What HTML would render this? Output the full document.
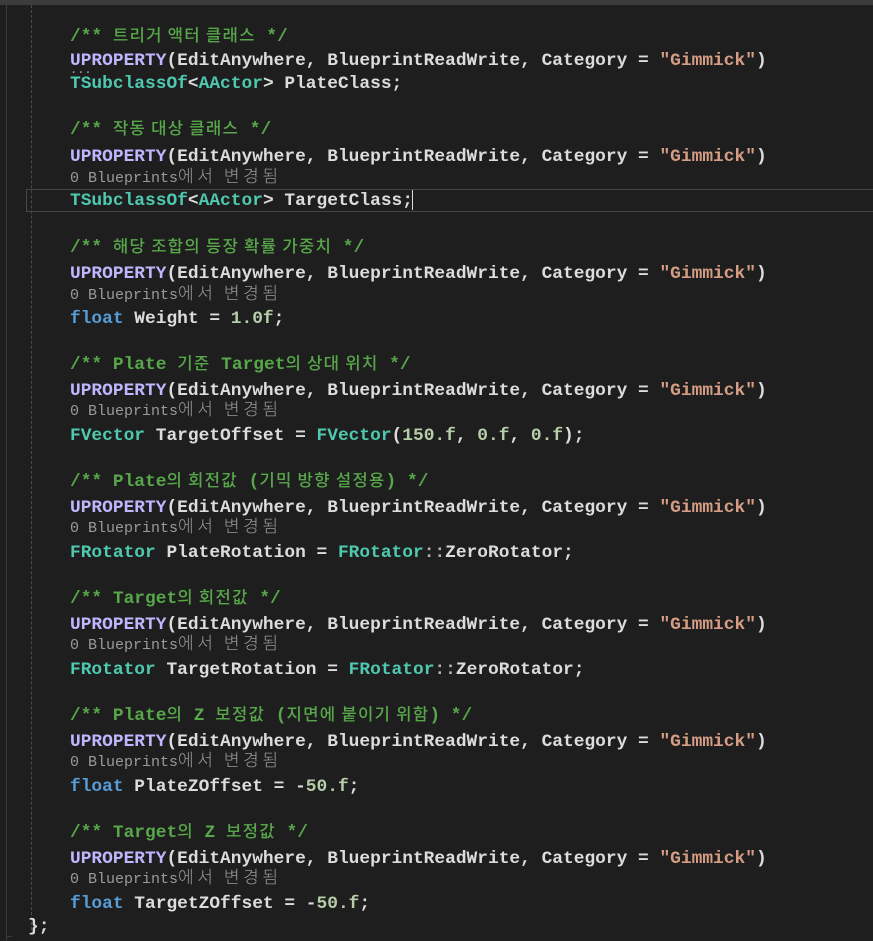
<!DOCTYPE html>
<html><head><meta charset="utf-8"><style>
html,body{margin:0;padding:0;width:873px;height:941px;overflow:hidden;background:#1e1e1e;}
.top{position:absolute;left:0;top:0;width:873px;height:5px;background:#3c3c3c;}
.vl{position:absolute;left:6px;top:5px;width:1px;height:936px;background:#3a3a3a;}
.vb{position:absolute;left:6px;top:936px;width:6px;height:1px;background:#3a3a3a;}
.guide{position:absolute;left:31px;top:5px;width:0;height:930px;border-left:1px dashed #4a4a4a;}
.cur{position:absolute;left:26px;top:189px;width:850px;height:21px;border:1px solid #464646;}
.caret{position:absolute;left:412px;top:190px;width:1px;height:20px;background:#dcdcdc;}
.l{position:absolute;left:70px;height:23px;line-height:23px;white-space:pre;font-family:"Liberation Mono","NanumGothic","Noto Sans CJK KR",monospace;font-size:17.87px;font-weight:bold;color:#dcdcdc;}
.lens{position:absolute;left:70px;height:22px;line-height:22px;white-space:pre;font-family:"Liberation Mono","NanumGothic","Noto Sans CJK KR",monospace;font-size:15px;color:#9a9a9a;}
.lens b{font-size:17px;font-family:"Noto Sans CJK KR","NanumGothic",sans-serif;font-weight:300;letter-spacing:3.6px;line-height:1;}
.h{font-size:16.75px;font-family:"Noto Sans CJK KR","NanumGothic",sans-serif;font-weight:500;line-height:1;letter-spacing:1.2px;}
.c{color:#57a64a}.m{color:#beb7ff}.t{color:#4ec9b0}.k{color:#569cd6}.s{color:#d69d85}.n{color:#b5cea8}.p{color:#b4b4b4}
.dots{position:absolute;left:70px;top:63px;font-family:"Liberation Mono",monospace;font-size:12px;color:#aaa;}
</style></head><body>
<div class="top"></div><div class="vl"></div><div class="vb"></div><div class="guide"></div>
<div class="cur"></div><div class="caret"></div>

<div class="l c" style="top:26px">/** <span class="h">트리거 액터 클래스</span> */</div>
<div class="l" style="top:50px"><span class="m">UPROPERTY</span>(EditAnywhere, BlueprintReadWrite, Category = <span class="s">"Gimmick"</span>)</div>
<div class="dots">...</div>
<div class="l" style="top:73px"><span class="t">TSubclassOf</span>&lt;<span class="t">AActor</span>&gt; PlateClass;</div>

<div class="l c" style="top:119px">/** <span class="h">작동 대상 클래스</span> */</div>
<div class="l" style="top:146px"><span class="m">UPROPERTY</span>(EditAnywhere, BlueprintReadWrite, Category = <span class="s">"Gimmick"</span>)</div>
<div class="lens" style="top:166px">0 Blueprints<b>에서 변경됨</b></div>
<div class="l" style="top:190px"><span class="t">TSubclassOf</span>&lt;<span class="t">AActor</span>&gt; TargetClass;</div>

<div class="l c" style="top:237px">/** <span class="h">해당 조합의 등장 확률 가중치</span> */</div>
<div class="l" style="top:263px"><span class="m">UPROPERTY</span>(EditAnywhere, BlueprintReadWrite, Category = <span class="s">"Gimmick"</span>)</div>
<div class="lens" style="top:283px">0 Blueprints<b>에서 변경됨</b></div>
<div class="l" style="top:308px"><span class="k">float</span> Weight = <span class="n">1.0f</span>;</div>

<div class="l c" style="top:354px">/** Plate <span class="h">기준</span> Target<span class="h">의 상대 위치</span> */</div>
<div class="l" style="top:380px"><span class="m">UPROPERTY</span>(EditAnywhere, BlueprintReadWrite, Category = <span class="s">"Gimmick"</span>)</div>
<div class="lens" style="top:399px">0 Blueprints<b>에서 변경됨</b></div>
<div class="l" style="top:425px"><span class="t">FVector</span> TargetOffset = <span class="t">FVector</span>(<span class="n">150.f</span>, <span class="n">0.f</span>, <span class="n">0.f</span>);</div>

<div class="l c" style="top:471px">/** Plate<span class="h">의 회전값</span> (<span class="h">기믹 방향 설정용</span>) */</div>
<div class="l" style="top:497px"><span class="m">UPROPERTY</span>(EditAnywhere, BlueprintReadWrite, Category = <span class="s">"Gimmick"</span>)</div>
<div class="lens" style="top:516px">0 Blueprints<b>에서 변경됨</b></div>
<div class="l" style="top:542px"><span class="t">FRotator</span> PlateRotation = <span class="t">FRotator</span><span class="p">::</span>ZeroRotator;</div>

<div class="l c" style="top:588px">/** Target<span class="h">의 회전값</span> */</div>
<div class="l" style="top:614px"><span class="m">UPROPERTY</span>(EditAnywhere, BlueprintReadWrite, Category = <span class="s">"Gimmick"</span>)</div>
<div class="lens" style="top:633px">0 Blueprints<b>에서 변경됨</b></div>
<div class="l" style="top:659px"><span class="t">FRotator</span> TargetRotation = <span class="t">FRotator</span><span class="p">::</span>ZeroRotator;</div>

<div class="l c" style="top:705px">/** Plate<span class="h">의</span> Z <span class="h">보정값</span> (<span class="h">지면에 붙이기 위함</span>) */</div>
<div class="l" style="top:731px"><span class="m">UPROPERTY</span>(EditAnywhere, BlueprintReadWrite, Category = <span class="s">"Gimmick"</span>)</div>
<div class="lens" style="top:750px">0 Blueprints<b>에서 변경됨</b></div>
<div class="l" style="top:776px"><span class="k">float</span> PlateZOffset = -<span class="n">50.f</span>;</div>

<div class="l c" style="top:822px">/** Target<span class="h">의</span> Z <span class="h">보정값</span> */</div>
<div class="l" style="top:848px"><span class="m">UPROPERTY</span>(EditAnywhere, BlueprintReadWrite, Category = <span class="s">"Gimmick"</span>)</div>
<div class="lens" style="top:867px">0 Blueprints<b>에서 변경됨</b></div>
<div class="l" style="top:893px"><span class="k">float</span> TargetZOffset = -<span class="n">50.f</span>;</div>

<div class="l" style="top:916px;left:28px">};</div>
</body></html>
